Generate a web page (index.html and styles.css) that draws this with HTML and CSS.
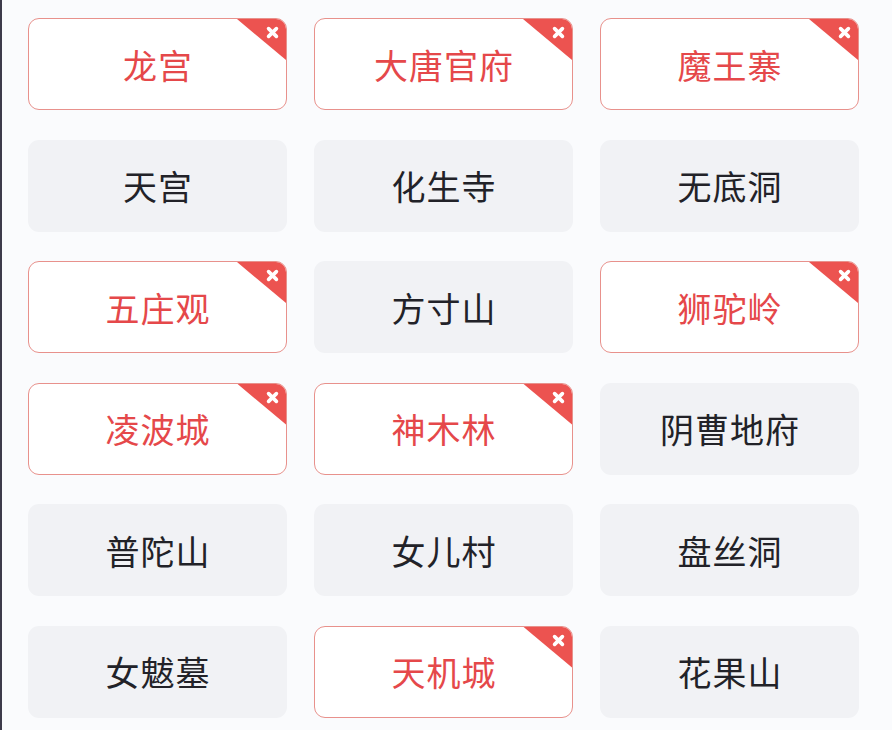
FILE: index.html
```html
<!DOCTYPE html>
<html lang="zh">
<head>
<meta charset="utf-8">
<link rel="stylesheet" href="styles.css">
</head>
<body>
<div class="grid">
  <div class="tag on">龙宫<span class="corner"><svg viewBox="0 0 10 10"><path d="M2 2L8 8M8 2L2 8"/></svg></span></div>
  <div class="tag on">大唐官府<span class="corner"><svg viewBox="0 0 10 10"><path d="M2 2L8 8M8 2L2 8"/></svg></span></div>
  <div class="tag on">魔王寨<span class="corner"><svg viewBox="0 0 10 10"><path d="M2 2L8 8M8 2L2 8"/></svg></span></div>
  <div class="tag">天宫</div>
  <div class="tag">化生寺</div>
  <div class="tag">无底洞</div>
  <div class="tag on">五庄观<span class="corner"><svg viewBox="0 0 10 10"><path d="M2 2L8 8M8 2L2 8"/></svg></span></div>
  <div class="tag">方寸山</div>
  <div class="tag on">狮驼岭<span class="corner"><svg viewBox="0 0 10 10"><path d="M2 2L8 8M8 2L2 8"/></svg></span></div>
  <div class="tag on">凌波城<span class="corner"><svg viewBox="0 0 10 10"><path d="M2 2L8 8M8 2L2 8"/></svg></span></div>
  <div class="tag on">神木林<span class="corner"><svg viewBox="0 0 10 10"><path d="M2 2L8 8M8 2L2 8"/></svg></span></div>
  <div class="tag">阴曹地府</div>
  <div class="tag">普陀山</div>
  <div class="tag">女儿村</div>
  <div class="tag">盘丝洞</div>
  <div class="tag">女魃墓</div>
  <div class="tag on">天机城<span class="corner"><svg viewBox="0 0 10 10"><path d="M2 2L8 8M8 2L2 8"/></svg></span></div>
  <div class="tag">花果山</div>
</div>
</body>
</html>
```
FILE: styles.css
```css
html, body {
  margin: 0;
  padding: 0;
  background: #fafbfd;
}
body {
  width: 892px;
  height: 730px;
  overflow: hidden;
  border-left: 2px solid #3d3b4a;
  box-sizing: border-box;
  font-family: "Noto Sans CJK SC", "Noto Sans", sans-serif;
}
.grid {
  display: grid;
  grid-template-columns: repeat(3, 259px);
  grid-auto-rows: 92px;
  column-gap: 27px;
  row-gap: 29.5px;
  padding: 18px 0 0 26px;
}
.tag {
  position: relative;
  box-sizing: border-box;
  border-radius: 11px;
  background: #f1f2f5;
  color: #222228;
  font-size: 34px;
  display: flex;
  align-items: center;
  justify-content: center;
  overflow: hidden;
  letter-spacing: 1px;
  padding-left: 1px;
}
.tag.on {
  background: #ffffff;
  border: 1.5px solid #e8918c;
  color: #e5484a;
}
.corner {
  position: absolute;
  top: 0;
  right: 0;
  width: 49px;
  height: 41px;
  background: #ec5350;
  clip-path: polygon(0 0, 100% 0, 100% 100%);
}
.corner svg {
  position: absolute;
  top: 7px;
  right: 7px;
  width: 13px;
  height: 13px;
}
.corner path {
  stroke: #ffffff;
  stroke-width: 2.8;
  stroke-linecap: round;
  fill: none;
}
```
